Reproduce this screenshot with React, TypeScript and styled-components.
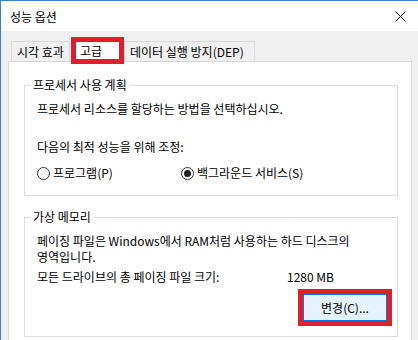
import styled, { createGlobalStyle } from "styled-components";

const GlobalStyle = createGlobalStyle`
  html, body {
    margin: 0;
    padding: 0;
    background: #f0f0f0;
  }
  body {
    font-family: "Noto Sans CJK KR", "Noto Sans", sans-serif;
    font-size: 12px;
    color: #000;
  }
`;

const Window = styled.div`
  width: 418px;
  height: 340px;
  box-sizing: border-box;
  border-top: 1px solid #3a80cf;
  border-left: 1px solid #3a80cf;
  background: #f0f0f0;
  overflow: hidden;
  display: flex;
  flex-direction: column;
`;

const TitleBar = styled.div`
  height: 30px;
  flex: none;
  background: #fff;
  display: flex;
  align-items: center;
  justify-content: space-between;
  padding: 0 12px 0 9px;
  font-size: 12px;
`;

const Body = styled.div`
  flex: 1;
  padding: 10px 6px 0 7px;
  display: flex;
  flex-direction: column;
`;

const TabStrip = styled.div`
  display: flex;
  align-items: flex-start;
  height: 20px;
  padding-left: 3px;
`;

const Tab = styled.div<{ $w: number }>`
  box-sizing: border-box;
  width: ${(p) => p.$w}px;
  height: 20px;
  border: 1px solid #d9d9d9;
  border-bottom: none;
  background: #f0f0f0;
  display: flex;
  align-items: center;
  padding-left: 5px;
  line-height: 16px;
`;

const ActiveTab = styled.div`
  box-sizing: border-box;
  position: relative;
  z-index: 1;
  width: 53px;
  height: 27px;
  margin: -4px 0 0 1px;
  border: 5px solid #e31e2c;
  background: #fff;
  display: flex;
  align-items: center;
  padding-left: 4px;
  line-height: 16px;
`;

const Panel = styled.div`
  box-sizing: border-box;
  height: 300px;
  border: 1px solid #d9d9d9;
  background: #fff;
  padding: 15px 13px 0 15px;
  display: flex;
  flex-direction: column;
  gap: 13px;
`;

const Group = styled.fieldset<{ $bottom: number }>`
  margin: 0;
  border: 1px solid #dcdcdc;
  padding: 8px 12px ${(p) => p.$bottom}px 12px;
  min-width: 0;
`;

const Legend = styled.legend`
  padding: 0 3px;
  margin-left: -7px;
  line-height: 16px;
`;

const Line = styled.div<{ $gap?: number }>`
  line-height: 16px;
  margin-top: ${(p) => p.$gap ?? 0}px;
  white-space: nowrap;
`;

const RadioRow = styled.div`
  display: grid;
  grid-template-columns: 144px auto;
  margin-top: 10px;
  line-height: 16px;
`;

const RadioItem = styled.label`
  display: flex;
  align-items: center;
  gap: 3px;
`;

const RadioCircle = styled.span<{ $checked?: boolean }>`
  box-sizing: border-box;
  width: 13px;
  height: 13px;
  border-radius: 50%;
  border: 1px solid #333;
  background: #fff;
  display: flex;
  align-items: center;
  justify-content: center;
  &::after {
    content: "";
    width: 7px;
    height: 7px;
    border-radius: 50%;
    background: ${(p) => (p.$checked ? "#222" : "transparent")};
  }
`;

const SizeRow = styled.div`
  display: grid;
  grid-template-columns: 250px auto;
  line-height: 16px;
  margin-top: 4px;
`;

const ButtonRow = styled.div`
  display: flex;
  justify-content: flex-end;
  margin-top: 4px;
  margin-right: -7px;
`;

const Highlight = styled.div`
  border: 5px solid #e31e2c;
`;

const Button = styled.button`
  box-sizing: border-box;
  width: 84px;
  height: 27px;
  border: 1px solid #0078d7;
  background: #e5f1fb;
  font-family: inherit;
  font-size: 12px;
  color: #000;
  padding: 0;
  display: block;
`;

function CloseIcon() {
  return (
    <svg width="11" height="11" viewBox="0 0 11 11">
      <path d="M0.5 0.5 L10.5 10.5 M10.5 0.5 L0.5 10.5" stroke="#111" strokeWidth="1" fill="none" />
    </svg>
  );
}

export default function App() {
  return (
    <>
      <GlobalStyle />
      <Window>
        <TitleBar>
          <span>성능 옵션</span>
          <CloseIcon />
        </TitleBar>
        <Body>
          <TabStrip>
            <Tab $w={59}>시각 효과</Tab>
            <ActiveTab>고급</ActiveTab>
            <Tab $w={131}>데이터 실행 방지(DEP)</Tab>
          </TabStrip>
          <Panel>
            <Group $bottom={14}>
              <Legend>프로세서 사용 계획</Legend>
              <Line>프로세서 리소스를 할당하는 방법을 선택하십시오.</Line>
              <Line $gap={22}>다음의 최적 성능을 위해 조정:</Line>
              <RadioRow>
                <RadioItem>
                  <RadioCircle />
                  프로그램(P)
                </RadioItem>
                <RadioItem>
                  <RadioCircle $checked />
                  백그라운드 서비스(S)
                </RadioItem>
              </RadioRow>
            </Group>
            <Group $bottom={10}>
              <Legend>가상 메모리</Legend>
              <Line>페이징 파일은 Windows에서 RAM처럼 사용하는 하드 디스크의</Line>
              <Line>영역입니다.</Line>
              <SizeRow>
                <span>모든 드라이브의 총 페이징 파일 크기:</span>
                <span>1280 MB</span>
              </SizeRow>
              <ButtonRow>
                <Highlight>
                  <Button>변경(C)...</Button>
                </Highlight>
              </ButtonRow>
            </Group>
          </Panel>
        </Body>
      </Window>
    </>
  );
}
